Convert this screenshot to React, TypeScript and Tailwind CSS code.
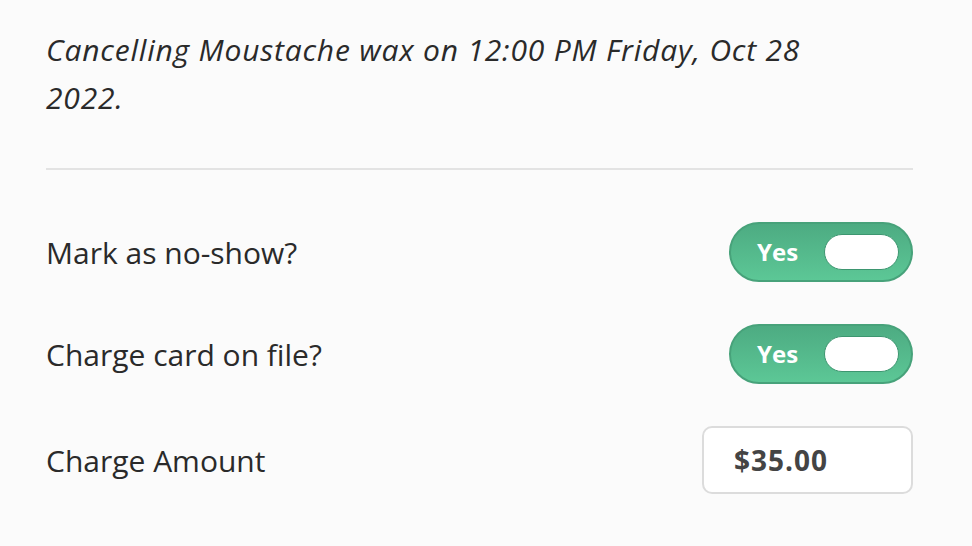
import React from 'react';

const Toggle: React.FC<{ label: string }> = ({ label }) => (
  <div className="flex items-center h-[60px] w-[184px] rounded-full border-2 border-[#47a27a] bg-gradient-to-b from-[#4dab82] to-[#5cc796] pl-[26px] pr-[12px] justify-between">
    <span className="text-white font-bold text-[24px]">{label}</span>
    <span className="h-[36px] w-[75px] rounded-full bg-white border border-[#3d9670]" />
  </div>
);

const Row: React.FC<{ label: string; children: React.ReactNode }> = ({ label, children }) => (
  <div className="flex items-center justify-between">
    <span className="text-[30px] text-[#2a2a2a]">{label}</span>
    {children}
  </div>
);

const App: React.FC = () => {
  return (
    <div className="w-[972px] h-[546px] bg-[#fbfbfb] font-['Open_Sans',sans-serif] pl-[46px] pr-[59px] pt-[26px] overflow-hidden">
      <p className="italic text-[30px] leading-[48px] tracking-[0.8px] text-[#2a2a2a] w-[810px]">
        Cancelling Moustache wax on 12:00 PM Friday, Oct 28 2022.
      </p>
      <div className="h-[2px] bg-[#e3e3e3] mt-[46px] mb-[52px]" />
      <div className="flex flex-col gap-[42px]">
        <Row label="Mark as no-show?">
          <Toggle label="Yes" />
        </Row>
        <Row label="Charge card on file?">
          <Toggle label="Yes" />
        </Row>
        <Row label="Charge Amount">
          <div className="h-[68px] w-[211px] rounded-[10px] border-2 border-[#dcdcdc] bg-white flex items-center pl-[30px] text-[28px] tracking-[1px] font-bold text-[#444]">
            $35.00
          </div>
        </Row>
      </div>
    </div>
  );
};

export default App;
